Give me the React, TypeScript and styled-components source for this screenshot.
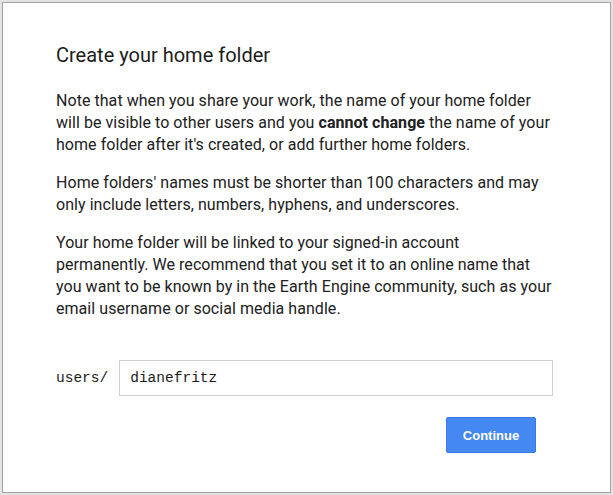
import React from "react";
import styled, { createGlobalStyle } from "styled-components";

const GlobalStyle = createGlobalStyle`
  html, body {
    margin: 0;
    padding: 0;
    background: #e2e2e0;
    font-family: Roboto, "Liberation Sans", Arial, sans-serif;
  }
`;

const SPage = styled.div`
  padding: 2px;
  height: 495px;
  box-sizing: border-box;
  overflow: hidden;
`;

const SDialog = styled.div`
  box-sizing: border-box;
  width: 609px;
  height: 491px;
  background: #fff;
  border: 1px solid #a3a3a3;
  padding: 40px 55px 38px 53px;
  display: flex;
  flex-direction: column;
  color: #212121;
`;

const STitle = styled.h2`
  margin: 0 0 23px;
  font-size: 20px;
  line-height: 24px;
  font-weight: 400;
  color: #1c1c1c;
`;

const SText = styled.p`
  margin: 0 0 16px;
  font-size: 16px;
  line-height: 22px;
  letter-spacing: 0.05px;

  &:last-of-type {
    margin-bottom: 40px;
  }

  b {
    font-weight: 700;
  }
`;

const SRow = styled.div`
  display: flex;
  align-items: center;
  gap: 11px;
  margin-right: 2px;
`;

const SLabel = styled.span`
  font-family: "Liberation Mono", "DejaVu Sans Mono", monospace;
  font-size: 14.5px;
  color: #1a1a1a;
`;

const SInput = styled.input`
  flex: 1;
  box-sizing: border-box;
  height: 36px;
  border: 1px solid #cfcfcf;
  padding: 0 10px;
  font-family: "Liberation Mono", "DejaVu Sans Mono", monospace;
  font-size: 14.5px;
  color: #1a1a1a;
  outline: none;
`;

const SFooter = styled.div`
  display: flex;
  justify-content: flex-end;
  padding-right: 19px;
  margin-top: 21px;
`;

const SButton = styled.button`
  width: 90px;
  height: 36px;
  border: 1px solid #3b78e7;
  border-radius: 2px;
  background: #4688f1;
  color: #fff;
  font-family: "Liberation Sans", Arial, sans-serif;
  font-weight: 700;
  font-size: 13px;
  cursor: pointer;
`;

export default function App() {
  return (
    <SPage>
      <GlobalStyle />
      <SDialog>
        <STitle>Create your home folder</STitle>
        <SText>
          Note that when you share your work, the name of your home folder
          will be visible to other users and you <b>cannot change</b> the name
          of your home folder after it's created, or add further home folders.
        </SText>
        <SText>
          Home folders' names must be shorter than 100 characters and may only
          include letters, numbers, hyphens, and underscores.
        </SText>
        <SText>
          Your home folder will be linked to your signed-in account
          permanently. We recommend that you set it to an online name that you
          want to be known by in the Earth Engine community, such as your email
          username or social media handle.
        </SText>
        <SRow>
          <SLabel>users/</SLabel>
          <SInput defaultValue="dianefritz" />
        </SRow>
        <SFooter>
          <SButton>Continue</SButton>
        </SFooter>
      </SDialog>
    </SPage>
  );
}
